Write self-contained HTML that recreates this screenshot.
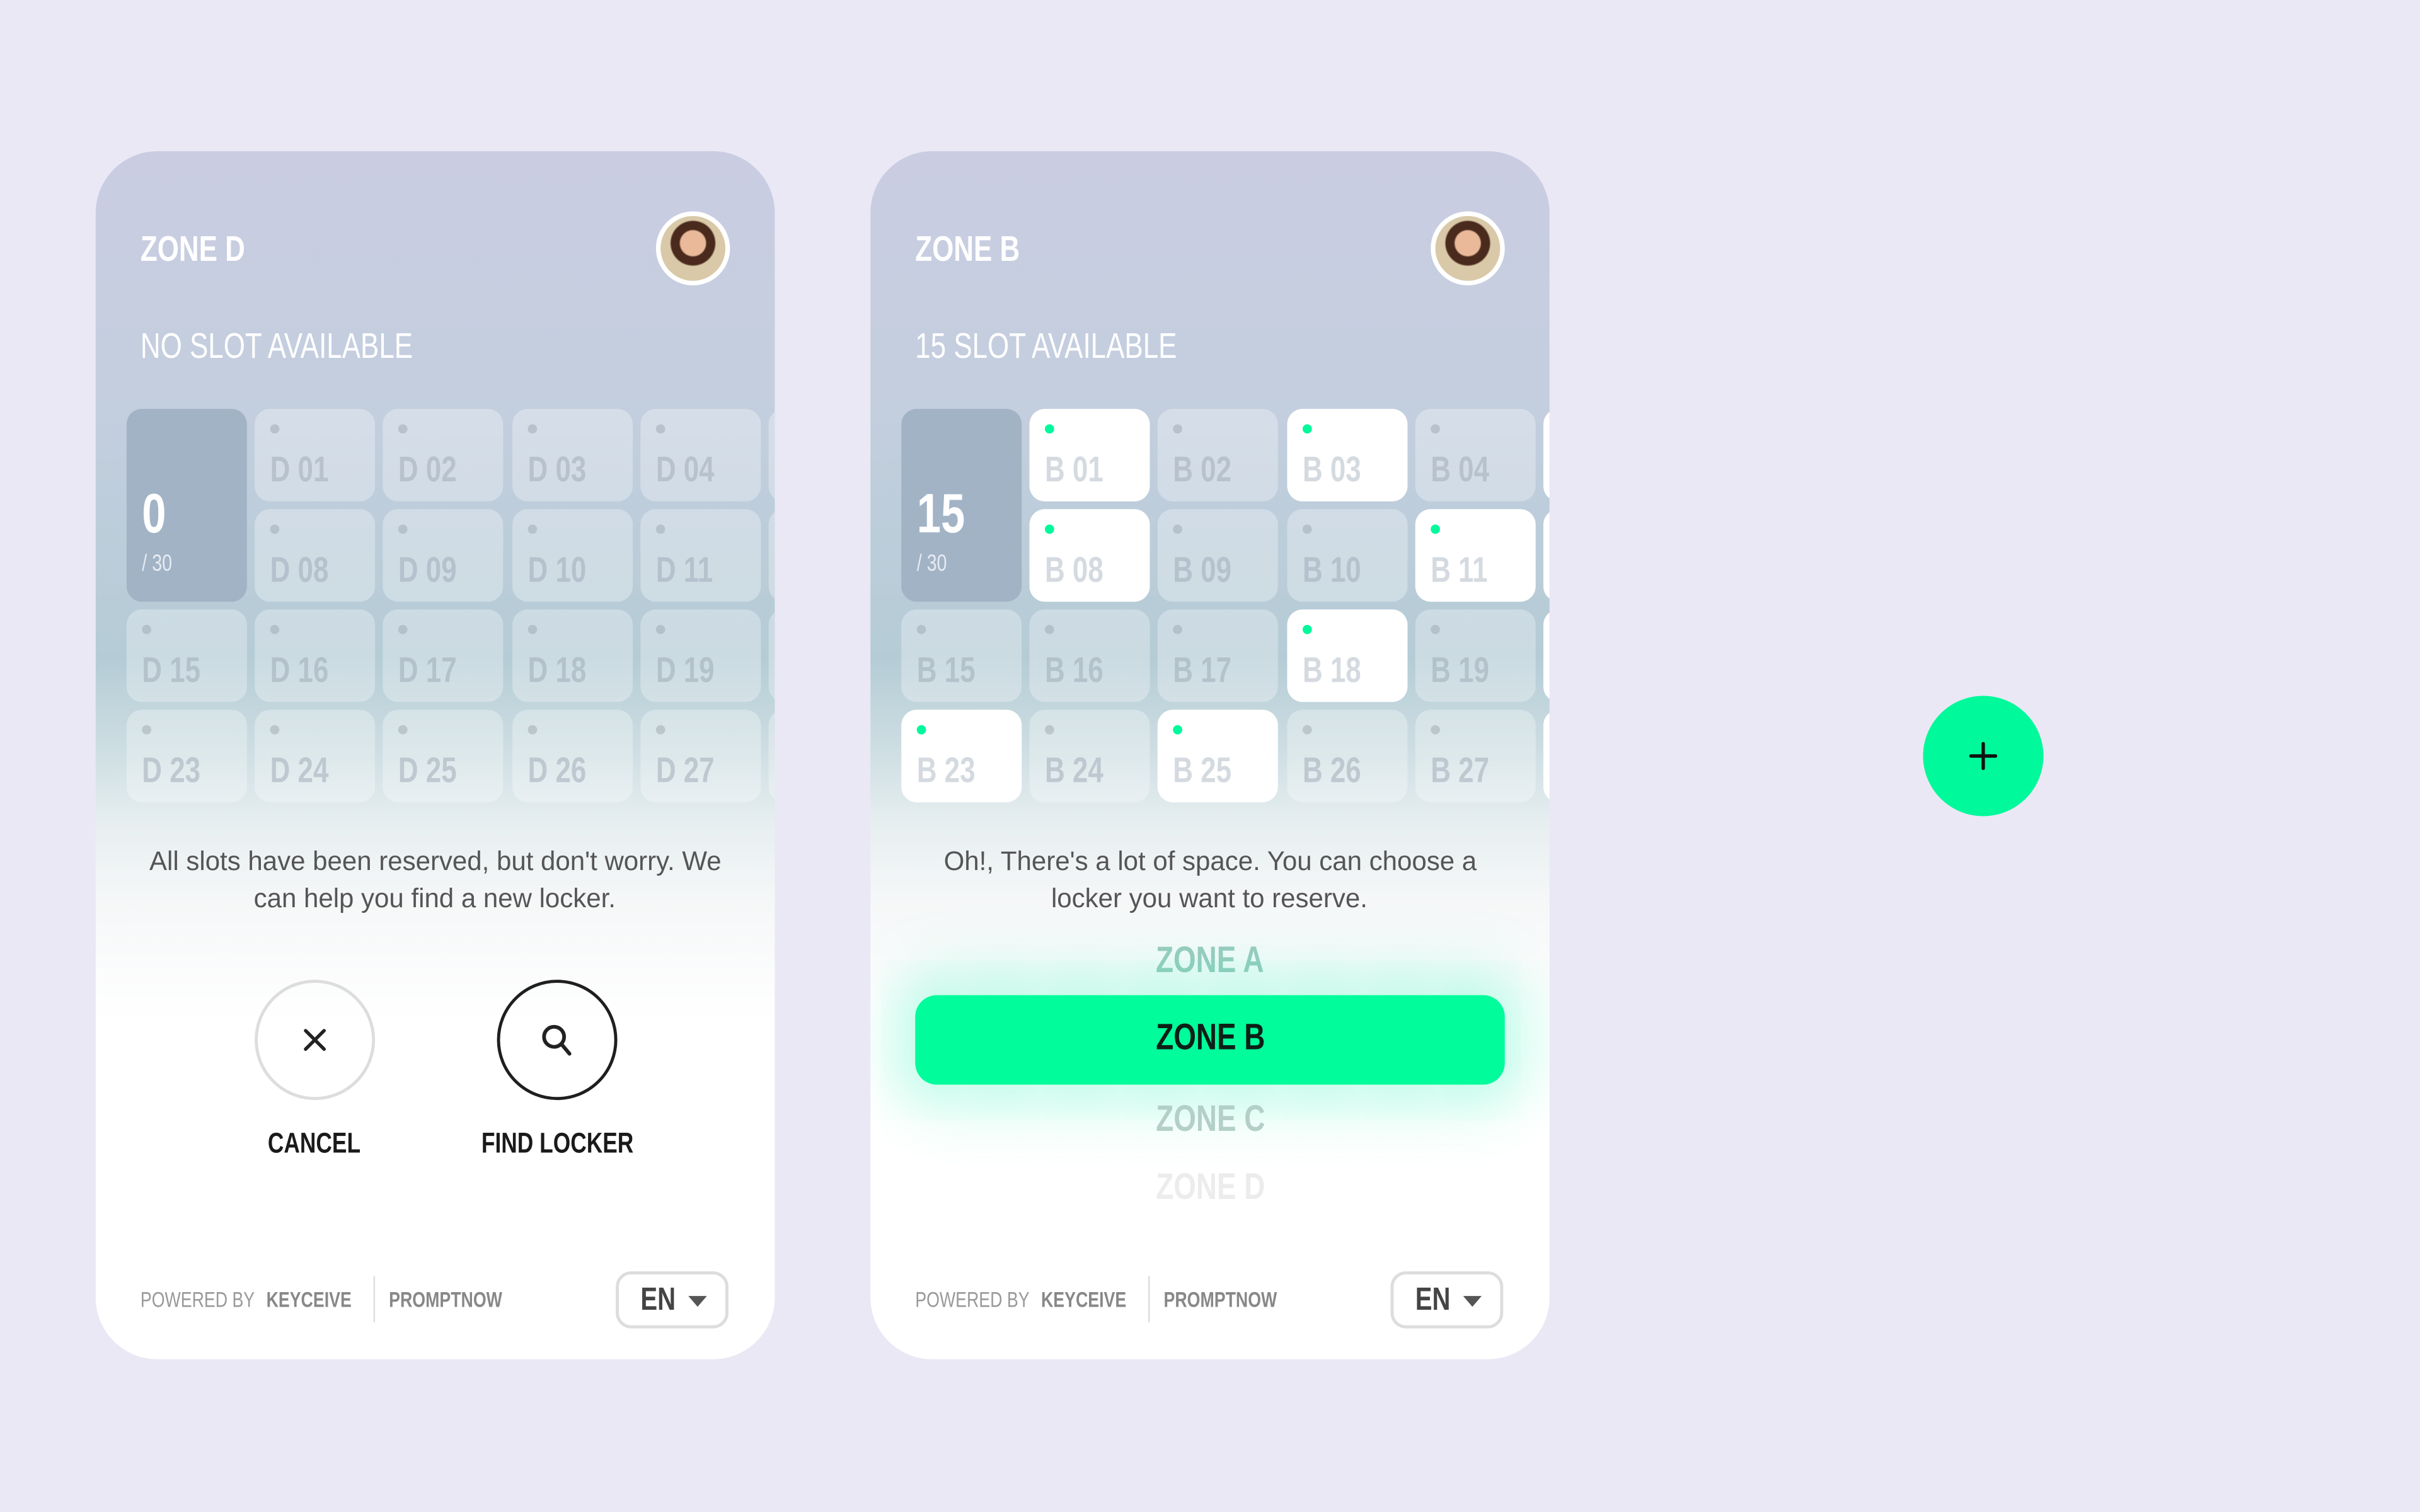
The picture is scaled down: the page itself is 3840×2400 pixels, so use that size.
<!DOCTYPE html>
<html><head><meta charset="utf-8"><style>
*{margin:0;padding:0;box-sizing:border-box}
html,body{width:3840px;height:2400px;overflow:hidden;background:#eae8f5}
#w{position:absolute;left:0;top:0;width:1568px;height:980px;transform:scale(2.44898);transform-origin:0 0;font-family:"Liberation Sans",sans-serif}
.c{display:inline-block;transform:scaleX(.78);transform-origin:0 50%;white-space:nowrap}
.cc{display:inline-block;transform:scaleX(.78);transform-origin:50% 50%;white-space:nowrap}
.card{position:absolute;top:98px;width:440px;height:783px;border-radius:40px;overflow:hidden;background:linear-gradient(180deg,#cacde2 0%,#c3cede 22%,#b5ccd6 42%,#cfdfe3 50%,#e8eff1 56%,#f5f7f8 62%,#fff 72%,#fff 100%)}
.t{position:absolute;width:78px;height:60px;border-radius:10px;background:rgba(255,255,255,.3);color:rgba(160,172,184,.55);font-weight:bold;font-size:23px;padding:24px 0 0 10px;line-height:30px}
.t:before{content:"";position:absolute;left:10px;top:10px;width:6px;height:6px;border-radius:50%;background:rgba(150,160,170,.45)}
.t.g{background:#fff;color:#d4dae0}
.t.g:before{background:#00f99a}
.big{position:absolute;left:20px;top:167px;width:78px;height:125px;border-radius:10px;background:#a2b3c6;color:#fff}
.big b{position:absolute;left:10px;top:48px;font-size:36px;line-height:40px}
.big i{position:absolute;left:10px;top:92px;font-style:normal;font-size:15px;color:#e6ebf2}
.hd{position:absolute;left:29px;top:50px;color:#fff;font-weight:bold;font-size:23px}
.sub{position:absolute;left:29px;top:113px;color:#fff;font-size:23px}
.av{position:absolute;left:363px;top:39px;width:48px;height:48px;border-radius:50%;border:3px solid #fff;background:radial-gradient(circle at 50% 42%,#e9b99a 0 8px,#4a2a1c 9px 14px,#d9c9a8 15px)}
.msg{position:absolute;left:0;width:440px;top:448px;text-align:center;font-size:17.5px;line-height:24px;color:#555}
.msg span{display:inline-block;transform:scaleX(.98);white-space:nowrap}
.ft{position:absolute;left:29px;top:736px;font-size:14px;color:#999}
.ft b{color:#888;margin-left:6px}
.sep{position:absolute;left:180px;top:729px;width:1px;height:30px;background:#ddd}
.pn{position:absolute;left:190px;top:736px;font-size:14px;color:#888;font-weight:bold}
.en{position:absolute;left:337px;top:726px;width:73px;height:37px;border:2px solid #ddd;border-radius:10px;font-weight:bold;font-size:21px;color:#444;padding:5px 0 0 14px}
.en:after{content:"";position:absolute;right:12px;top:14px;border:6px solid transparent;border-top:7px solid #555}
.cb{position:absolute;width:78px;height:78px;border-radius:50%;top:537px;border:2px solid #ddd}
.lb{position:absolute;top:632px;font-weight:bold;font-size:18.5px;color:#1a1a1a;width:160px;text-align:center}
.z{position:absolute;left:0;width:440px;text-align:center;font-weight:bold;font-size:24px}
</style></head><body><div id="w">

<div class="card" style="left:62px">
<div class="hd"><span class="c">ZONE D</span></div><div class="av"></div>
<div class="sub"><span class="c">NO SLOT AVAILABLE</span></div>
<div class="big"><b><span class="c">0</span></b><i><span class="c">/ 30</span></i></div>
<div class="t" style="left:103px;top:167px"><span class="c">D 01</span></div><div class="t" style="left:186px;top:167px"><span class="c">D 02</span></div><div class="t" style="left:270px;top:167px"><span class="c">D 03</span></div><div class="t" style="left:353px;top:167px"><span class="c">D 04</span></div><div class="t" style="left:436px;top:167px"></div>
<div class="t" style="left:103px;top:232px"><span class="c">D 08</span></div><div class="t" style="left:186px;top:232px"><span class="c">D 09</span></div><div class="t" style="left:270px;top:232px"><span class="c">D 10</span></div><div class="t" style="left:353px;top:232px"><span class="c">D 11</span></div><div class="t" style="left:436px;top:232px"></div>
<div class="t" style="left:20px;top:297px"><span class="c">D 15</span></div><div class="t" style="left:103px;top:297px"><span class="c">D 16</span></div><div class="t" style="left:186px;top:297px"><span class="c">D 17</span></div><div class="t" style="left:270px;top:297px"><span class="c">D 18</span></div><div class="t" style="left:353px;top:297px"><span class="c">D 19</span></div><div class="t" style="left:436px;top:297px"></div>
<div class="t" style="left:20px;top:362px"><span class="c">D 23</span></div><div class="t" style="left:103px;top:362px"><span class="c">D 24</span></div><div class="t" style="left:186px;top:362px"><span class="c">D 25</span></div><div class="t" style="left:270px;top:362px"><span class="c">D 26</span></div><div class="t" style="left:353px;top:362px"><span class="c">D 27</span></div><div class="t" style="left:436px;top:362px"></div>
<div class="msg"><span>All slots have been reserved, but don't worry. We</span><br><span>can help you find a new locker.</span></div>
<div class="cb" style="left:103px"><svg width="74" height="74" viewBox="0 0 74 74" style="position:absolute;left:0;top:0"><path d="M31 31L43 43M43 31L31 43" stroke="#222" stroke-width="2.2" stroke-linecap="round"/></svg></div>
<div class="cb" style="left:260px;border-color:#1f1f1f"><svg width="74" height="74" viewBox="0 0 74 74" style="position:absolute;left:0;top:0"><circle cx="35" cy="35" r="6.5" fill="none" stroke="#222" stroke-width="2.4"/><path d="M40 40L45 46" stroke="#222" stroke-width="2.4" stroke-linecap="round"/></svg></div>
<div class="lb" style="left:62px"><span class="cc">CANCEL</span></div><div class="lb" style="left:219px"><span class="cc">FIND LOCKER</span></div>
<div class="ft"><span class="c">POWERED BY <b>KEYCEIVE</b></span></div><div class="sep"></div><div class="pn"><span class="c">PROMPTNOW</span></div>
<div class="en"><span class="c">EN</span></div>
</div>

<div class="card" style="left:564px">
<div class="hd"><span class="c">ZONE B</span></div><div class="av"></div>
<div class="sub"><span class="c">15 SLOT AVAILABLE</span></div>
<div class="big"><b><span class="c">15</span></b><i><span class="c">/ 30</span></i></div>
<div class="t g" style="left:103px;top:167px"><span class="c">B 01</span></div><div class="t" style="left:186px;top:167px"><span class="c">B 02</span></div><div class="t g" style="left:270px;top:167px"><span class="c">B 03</span></div><div class="t" style="left:353px;top:167px"><span class="c">B 04</span></div><div class="t g" style="left:436px;top:167px"></div>
<div class="t g" style="left:103px;top:232px"><span class="c">B 08</span></div><div class="t" style="left:186px;top:232px"><span class="c">B 09</span></div><div class="t" style="left:270px;top:232px"><span class="c">B 10</span></div><div class="t g" style="left:353px;top:232px"><span class="c">B 11</span></div><div class="t g" style="left:436px;top:232px"></div>
<div class="t" style="left:20px;top:297px"><span class="c">B 15</span></div><div class="t" style="left:103px;top:297px"><span class="c">B 16</span></div><div class="t" style="left:186px;top:297px"><span class="c">B 17</span></div><div class="t g" style="left:270px;top:297px"><span class="c">B 18</span></div><div class="t" style="left:353px;top:297px"><span class="c">B 19</span></div><div class="t g" style="left:436px;top:297px"></div>
<div class="t g" style="left:20px;top:362px"><span class="c">B 23</span></div><div class="t" style="left:103px;top:362px"><span class="c">B 24</span></div><div class="t g" style="left:186px;top:362px"><span class="c">B 25</span></div><div class="t" style="left:270px;top:362px"><span class="c">B 26</span></div><div class="t" style="left:353px;top:362px"><span class="c">B 27</span></div><div class="t g" style="left:436px;top:362px"></div>
<div class="msg"><span>Oh!, There's a lot of space. You can choose a</span><br><span>locker you want to reserve.</span></div>
<div class="z" style="top:511px;color:#9ccbbf"><span class="cc">ZONE A</span></div>
<div style="position:absolute;left:29px;top:547px;width:382px;height:58px;border-radius:14px;background:#00fc9b;box-shadow:0 0 40px 14px rgba(0,240,170,.28)"></div>
<div class="z" style="top:561px;color:#0d1f17"><span class="cc">ZONE B</span></div>
<div class="z" style="top:614px;color:#b3cfc8"><span class="cc">ZONE C</span></div>
<div class="z" style="top:658px;color:#ececec"><span class="cc">ZONE D</span></div>
<div class="ft"><span class="c">POWERED BY <b>KEYCEIVE</b></span></div><div class="sep"></div><div class="pn"><span class="c">PROMPTNOW</span></div>
<div class="en"><span class="c">EN</span></div>
</div>

<div style="position:absolute;left:1246px;top:451px;width:78px;height:78px;border-radius:50%;background:#00f99a"><svg width="78" height="78" viewBox="0 0 78 78"><path d="M39 31V47M31 39H47" stroke="#111" stroke-width="2.2" stroke-linecap="round"/></svg></div>
</div></body></html>
